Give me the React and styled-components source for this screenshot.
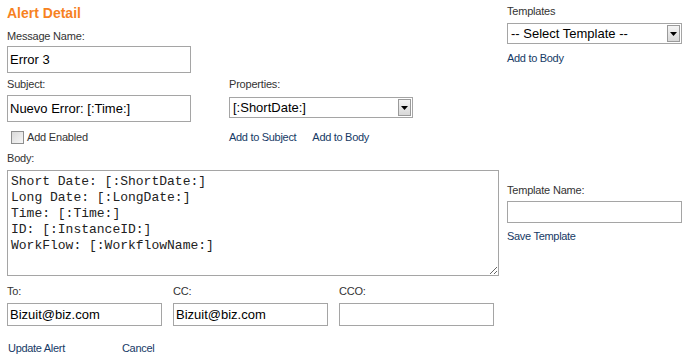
import React from 'react'
import styled, { createGlobalStyle } from 'styled-components';

const GlobalStyle = createGlobalStyle`
body{
    margin:0;
    background:#fff;
    font-family:"Liberation Sans", Arial, sans-serif;
}
`;

function SelectBox({value, width}) {
    return (
        <FakeSelect width={width}>
            <span>{value}</span>
            <ArrowButton>
                <svg width="7" height="4" viewBox="0 0 7 4">
                    <path d="M0 0H7L3.5 4Z" fill="#000"/>
                </svg>
            </ArrowButton>
        </FakeSelect>
    )
}

function App() {
    return (
        <Page>
            <GlobalStyle/>
            <TopSection>
                <Title>Alert Detail</Title>
                <Label gap={7}>Message Name:</Label>
                <TextInput top={3} width={184} height={27} defaultValue="Error 3"/>

                <FieldRow>
                    <Field>
                        <Label gap={4}>Subject:</Label>
                        <TextInput top={4} width={184} height={27} defaultValue="Nuevo Error: [:Time:]"/>
                    </Field>
                    <Field>
                        <Label gap={4}>Properties:</Label>
                        <SelectWrap top={6}>
                            <SelectBox value="[:ShortDate:]" width={184}/>
                        </SelectWrap>
                    </Field>
                </FieldRow>

                <OptionRow>
                    <CheckLabel>
                        <CheckBox type="checkbox"/>
                        Add Enabled
                    </CheckLabel>
                    <LinkGroup>
                        <ActionLink>Add to Subject</ActionLink>
                        <ActionLink>Add to Body</ActionLink>
                    </LinkGroup>
                </OptionRow>
            </TopSection>

            <TemplatesSection>
                <Label gap={0}>Templates</Label>
                <SelectWrap top={5}>
                    <SelectBox value="-- Select Template --" width={175}/>
                </SelectWrap>
                <LinkLine top={7}>
                    <ActionLink>Add to Body</ActionLink>
                </LinkLine>
            </TemplatesSection>

            <BodySection>
                <Label gap={6}>Body:</Label>
                <BodyArea
                    spellCheck={false}
                    defaultValue={"Short Date: [:ShortDate:]\nLong Date: [:LongDate:]\nTime: [:Time:]\nID: [:InstanceID:]\nWorkFlow: [:WorkflowName:]"}
                />
            </BodySection>

            <TemplateNameSection>
                <Label gap={38}>Template Name:</Label>
                <TextInput top={4} width={175} height={22}/>
                <LinkLine top={6}>
                    <ActionLink>Save Template</ActionLink>
                </LinkLine>
            </TemplateNameSection>

            <Recipients>
                <Field>
                    <Label gap={0}>To:</Label>
                    <TextInput top={5} width={155} height={23} defaultValue="Bizuit@biz.com"/>
                </Field>
                <Field>
                    <Label gap={0}>CC:</Label>
                    <TextInput top={5} width={155} height={23} defaultValue="Bizuit@biz.com"/>
                </Field>
                <Field>
                    <Label gap={0}>CCO:</Label>
                    <TextInput top={5} width={155} height={23}/>
                </Field>
            </Recipients>

            <Actions>
                <ActionLink>Update Alert</ActionLink>
                <ActionLink>Cancel</ActionLink>
            </Actions>
        </Page>
    )
}

export default App

const Page = styled.div`
display:grid;
grid-template-columns:500px 175px;
grid-template-areas:
    "top templates"
    "body tplname"
    "recipients ."
    "actions .";
align-items:start;
padding:4px 7px 0 7px;
width:689px;
height:356px;
box-sizing:border-box;
color:#333;
`;

const TopSection = styled.div`
grid-area:top;
display:flex;
flex-direction:column;
`;

const TemplatesSection = styled.div`
grid-area:templates;
display:flex;
flex-direction:column;
`;

const BodySection = styled.div`
grid-area:body;
display:flex;
flex-direction:column;
`;

const TemplateNameSection = styled.div`
grid-area:tplname;
display:flex;
flex-direction:column;
`;

const Title = styled.h1`
margin:0;
font-size:14px;
line-height:18px;
font-weight:700;
color:#f7821f;
`;

const Label = styled.label`
display:block;
margin-top:${p => p.gap}px;
font-size:11px;
line-height:14px;
letter-spacing:-0.2px;
color:#333;
`;

const TextInput = styled.input`
display:block;
box-sizing:border-box;
margin:${p => p.top}px 0 0 0;
width:${p => p.width}px;
height:${p => p.height}px;
padding:0 2px;
border:1px solid #a5a5a5;
font-family:"Liberation Sans", Arial, sans-serif;
font-size:13px;
color:#000;
outline:none;
`;

const FieldRow = styled.div`
display:flex;
gap:38px;
`;

const Field = styled.div`
display:flex;
flex-direction:column;
`;

const SelectWrap = styled.div`
margin-top:${p => p.top}px;
`;

const FakeSelect = styled.div`
box-sizing:border-box;
display:flex;
align-items:center;
justify-content:space-between;
width:${p => p.width}px;
height:21px;
padding:0 1px 0 3px;
border:1px solid #a5a5a5;
background:#fff;
font-size:13px;
color:#000;
cursor:default;
`;

const ArrowButton = styled.span`
box-sizing:border-box;
display:flex;
align-items:center;
justify-content:center;
width:13px;
height:17px;
border:1px solid #9a9a9a;
background:linear-gradient(#f4f4f4, #d8d8d8);
`;

const OptionRow = styled.div`
display:flex;
margin-top:8px;
height:14px;
align-items:center;
`;

const CheckLabel = styled.label`
display:flex;
align-items:center;
width:222px;
font-size:11px;
line-height:14px;
letter-spacing:-0.2px;
color:#333;
`;

const CheckBox = styled.input`
appearance:none;
box-sizing:border-box;
width:13px;
height:13px;
margin:0 3px 0 4px;
border:1px solid #8e8f8f;
background:linear-gradient(135deg, #d9d9d9, #f7f7f7);
`;

const LinkGroup = styled.div`
display:flex;
gap:16px;
`;

const ActionLink = styled.a`
font-size:11px;
line-height:14px;
letter-spacing:-0.3px;
color:#163a66;
text-decoration:none;
cursor:pointer;
`;

const LinkLine = styled.div`
margin-top:${p => p.top}px;
display:flex;
`;

const BodyArea = styled.textarea`
display:block;
box-sizing:border-box;
margin-top:5px;
width:492px;
height:106px;
padding:3px;
border:1px solid #a5a5a5;
font-family:"Liberation Mono", "Courier New", monospace;
font-size:13px;
line-height:16px;
color:#222;
resize:both;
outline:none;
`;

const Recipients = styled.div`
grid-area:recipients;
display:flex;
gap:11px;
margin-top:6px;
`;

const Actions = styled.div`
grid-area:actions;
display:flex;
gap:57px;
margin-top:14px;
padding-left:1px;
`;
